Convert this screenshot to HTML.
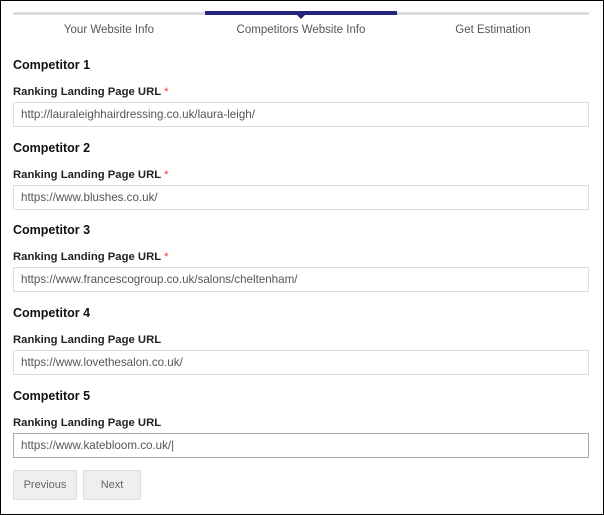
<!DOCTYPE html>
<html><head><style>
*{margin:0;padding:0;box-sizing:border-box}
body{width:604px;height:515px;background:#fff;font-family:"Liberation Sans",sans-serif;position:relative;overflow:hidden}
.frame{position:absolute;left:0;top:0;width:604px;height:515px;border:1px solid #000}
.bar{position:absolute;top:12px;height:3px;background:#ddd;left:13px;width:576px}
.act{position:absolute;top:11px;height:4px;background:#24247e;left:205px;width:192px}
.tri{position:absolute;left:297px;top:15px;width:0;height:0;border-left:4px solid transparent;border-right:4px solid transparent;border-top:4px solid #24247e}
.tab{position:absolute;top:24px;font-size:11.5px;color:#555;text-align:center;width:192px}
.h{position:absolute;left:13px;font-size:12.5px;font-weight:bold;color:#111}
.l{position:absolute;left:13px;font-size:11.3px;font-weight:bold;color:#222}
.l span{color:#e33;font-weight:normal}
.in{position:absolute;left:13px;width:576px;height:25px;border:1px solid #ddd;font-size:11.6px;color:#555;padding:5px 0 0 7px}
.btn{position:absolute;top:470px;height:30px;background:#efefef;border:1px solid #ddd;border-radius:2px;font-size:11px;color:#666;text-align:center;line-height:28px}
</style></head><body>
<div class="frame"></div>
<div class="bar"></div><div class="act"></div><div class="tri"></div>
<div class="tab" style="left:13px">Your Website Info</div>
<div class="tab" style="left:205px">Competitors Website Info</div>
<div class="tab" style="left:397px">Get Estimation</div>

<div class="h" style="top:58px">Competitor 1</div>
<div class="l" style="top:86px">Ranking Landing Page URL <span>*</span></div>
<div class="in" style="top:102px">http://lauraleighhairdressing.co.uk/laura-leigh/</div>

<div class="h" style="top:141px">Competitor 2</div>
<div class="l" style="top:169px">Ranking Landing Page URL <span>*</span></div>
<div class="in" style="top:185px">https://www.blushes.co.uk/</div>

<div class="h" style="top:223px">Competitor 3</div>
<div class="l" style="top:251px">Ranking Landing Page URL <span>*</span></div>
<div class="in" style="top:267px">https://www.francescogroup.co.uk/salons/cheltenham/</div>

<div class="h" style="top:306px">Competitor 4</div>
<div class="l" style="top:334px">Ranking Landing Page URL</div>
<div class="in" style="top:350px">https://www.lovethesalon.co.uk/</div>

<div class="h" style="top:389px">Competitor 5</div>
<div class="l" style="top:417px">Ranking Landing Page URL</div>
<div class="in" style="top:433px;border-color:#aaa">https://www.katebloom.co.uk/|</div>

<div class="btn" style="left:13px;width:64px">Previous</div>
<div class="btn" style="left:83px;width:58px">Next</div>
</body></html>
